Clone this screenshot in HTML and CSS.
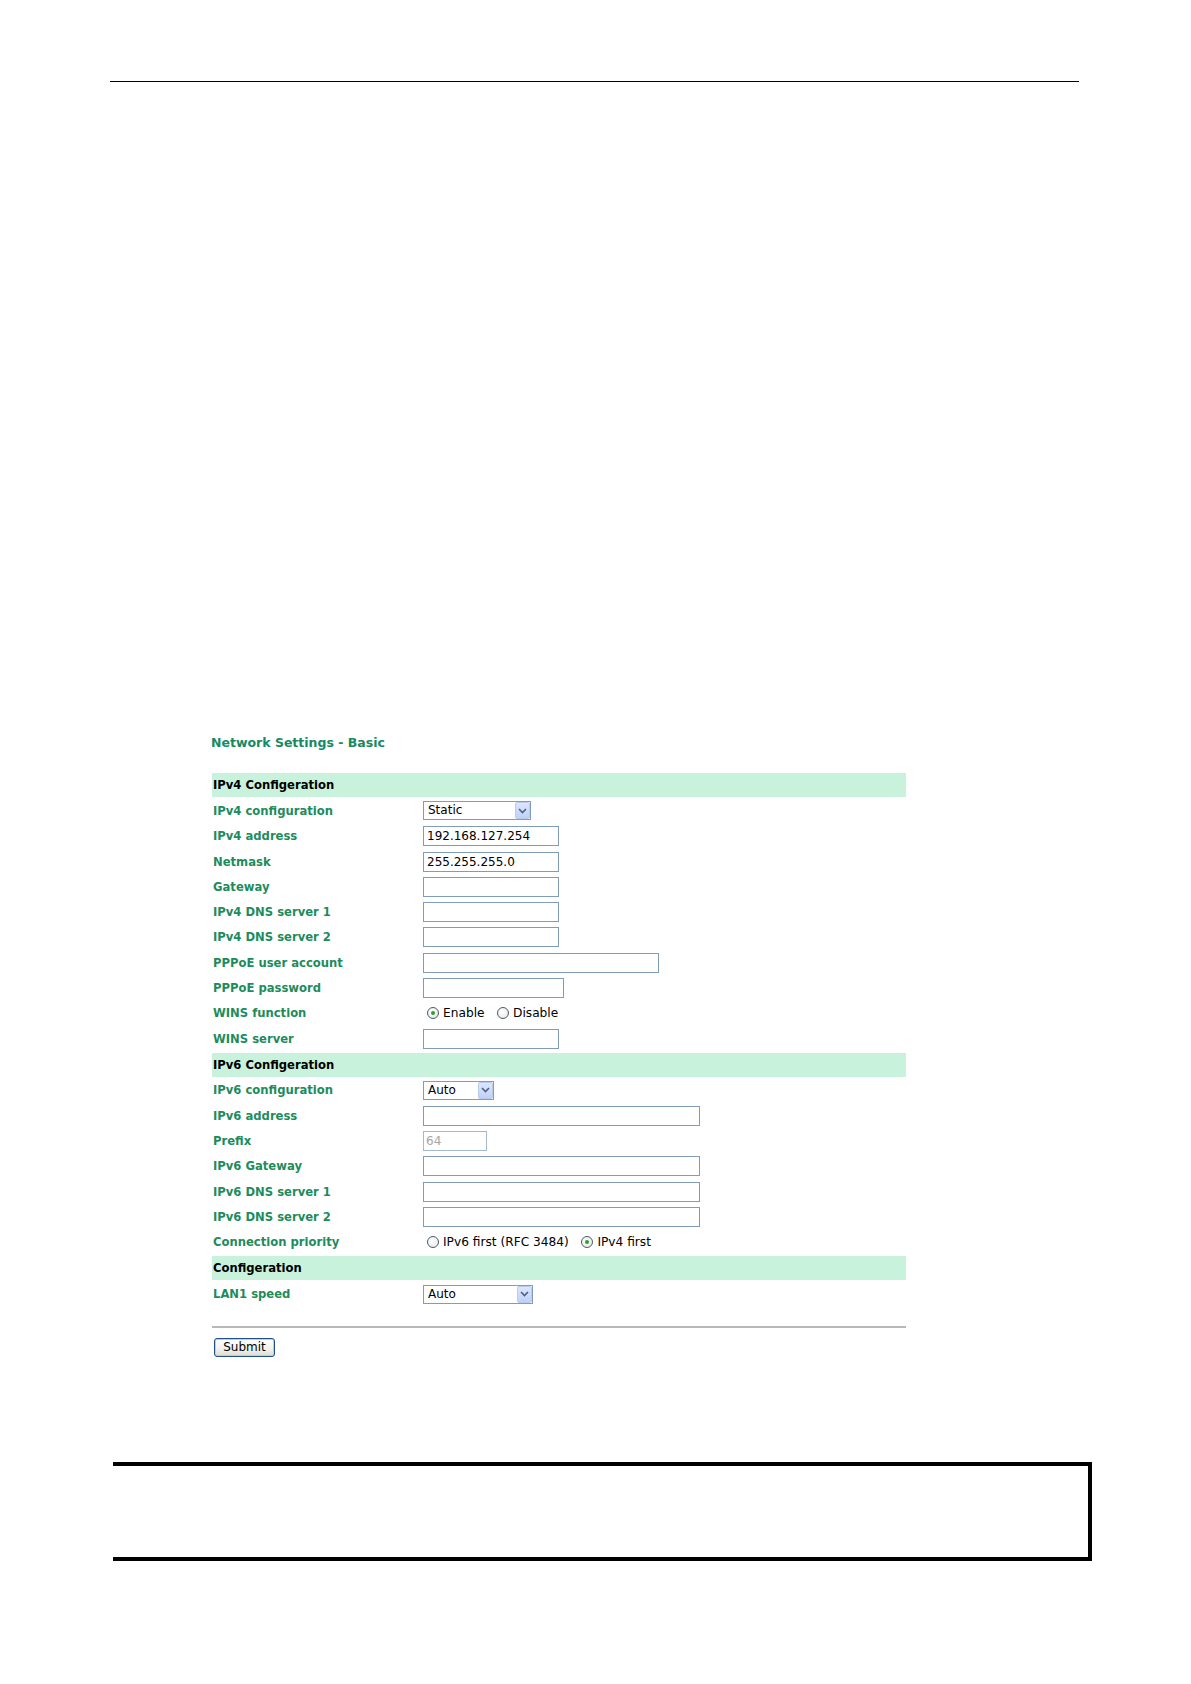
FILE: index.html
```html
<!DOCTYPE html>
<html>
<head>
<meta charset="utf-8">
<title>Network Settings - Basic</title>
<link rel="stylesheet" href="styles.css">
</head>
<body>
<div class="page-rule"></div>

<div class="form">
  <div class="title">Network Settings - Basic</div>

  <div class="table">
    <div class="bar">IPv4 Configeration</div>
    <div class="row"><div class="label">IPv4 configuration</div>
      <div class="select w107"><span class="sel-text">Static</span><span class="sel-btn"><svg width="9" height="6" viewBox="0 0 9 6"><path d="M1 1 L4.5 4.5 L8 1" fill="none" stroke="#4d6185" stroke-width="1.6"/></svg></span></div></div>
    <div class="row"><div class="label">IPv4 address</div><div class="input w135">192.168.127.254</div></div>
    <div class="row"><div class="label">Netmask</div><div class="input w135">255.255.255.0</div></div>
    <div class="row"><div class="label">Gateway</div><div class="input w135"></div></div>
    <div class="row"><div class="label">IPv4 DNS server 1</div><div class="input w135"></div></div>
    <div class="row"><div class="label">IPv4 DNS server 2</div><div class="input w135"></div></div>
    <div class="row"><div class="label">PPPoE user account</div><div class="input w235"></div></div>
    <div class="row"><div class="label">PPPoE password</div><div class="input w140"></div></div>
    <div class="row"><div class="label">WINS function</div>
      <div class="radios">
        <span class="radio checked"></span><span class="rtext">Enable</span>
        <span class="radio"></span><span class="rtext">Disable</span>
      </div></div>
    <div class="row"><div class="label">WINS server</div><div class="input w135"></div></div>

    <div class="bar">IPv6 Configeration</div>
    <div class="row"><div class="label">IPv6 configuration</div>
      <div class="select w71"><span class="sel-text">Auto</span><span class="sel-btn"><svg width="9" height="6" viewBox="0 0 9 6"><path d="M1 1 L4.5 4.5 L8 1" fill="none" stroke="#4d6185" stroke-width="1.6"/></svg></span></div></div>
    <div class="row"><div class="label">IPv6 address</div><div class="input w276"></div></div>
    <div class="row"><div class="label">Prefix</div><div class="input w64 disabled">64</div></div>
    <div class="row"><div class="label">IPv6 Gateway</div><div class="input w276"></div></div>
    <div class="row"><div class="label">IPv6 DNS server 1</div><div class="input w276"></div></div>
    <div class="row"><div class="label">IPv6 DNS server 2</div><div class="input w276"></div></div>
    <div class="row"><div class="label">Connection priority</div>
      <div class="radios">
        <span class="radio"></span><span class="rtext">IPv6 first (RFC 3484)</span>
        <span class="radio checked"></span><span class="rtext">IPv4 first</span>
      </div></div>

    <div class="bar">Configeration</div>
    <div class="row"><div class="label">LAN1 speed</div>
      <div class="select w105"><span class="sel-text">Auto</span><span class="sel-btn"><svg width="9" height="6" viewBox="0 0 9 6"><path d="M1 1 L4.5 4.5 L8 1" fill="none" stroke="#4d6185" stroke-width="1.6"/></svg></span></div></div>
  </div>

  <div class="hr"></div>
  <div class="actions"><button class="submit" type="button">Submit</button></div>
</div>

<div class="note-box"></div>
</body>
</html>
```

FILE: styles.css
```css
html, body {
  margin: 0;
  padding: 0;
  background: #ffffff;
}

body {
  font-family: "DejaVu Sans", Verdana, sans-serif;
  color: #000;
}

.page-rule {
  margin: 81px 0 0 110px;
  width: 969px;
  border-top: 1px solid #000;
}

.form {
  margin-left: 212px;
  width: 694px;
}

.title {
  margin-top: 653px;
  height: 16px;
  line-height: 16px;
  font-size: 12.5px;
  font-weight: bold;
  color: #158a63;
  margin-left: -1px;
}

.table {
  margin-top: 22px;
  display: flex;
  flex-direction: column;
  gap: 2.7px;
  width: 694px;
}

.bar {
  height: 24px;
  background: #c9f2dc;
  display: flex;
  align-items: center;
  font-size: 11.6px;
  font-weight: bold;
  color: #000;
  padding-left: 1px;
}

.row {
  height: 22.6px;
  display: flex;
  align-items: center;
}

.label {
  width: 210px;
  flex: none;
  padding-left: 1px;
  font-size: 11.6px;
  font-weight: bold;
  color: #1d8c5c;
}

.input {
  box-sizing: border-box;
  height: 20px;
  border: 1px solid #7f9db9;
  background: #fff;
  font-size: 12px;
  line-height: 18px;
  padding-left: 3px;
  color: #000;
  white-space: nowrap;
}

.input.disabled {
  color: #a5a5a5;
  border-color: #a6b8cc;
  padding-left: 2px;
}

.w64 { width: 64px; }
.w135 { width: 136px; }
.w140 { width: 141px; }
.w235 { width: 236px; }
.w276 { width: 277px; }
.w71 { width: 71px; }
.w105 { width: 110px; }
.w107 { width: 108px; }

.select {
  box-sizing: border-box;
  height: 19px;
  border: 1px solid #7f9db9;
  background: #fff;
  display: flex;
  align-items: stretch;
}

.sel-text {
  flex: 1;
  font-size: 12px;
  line-height: 17px;
  padding-left: 4px;
}

.sel-btn {
  width: 15px;
  margin: 0;
  box-sizing: border-box;
  border: 1px solid #b9cbf3;
  border-radius: 2px;
  background: linear-gradient(#dce6fd, #c0d1f7);
  display: flex;
  align-items: center;
  justify-content: center;
}

.radios {
  display: flex;
  align-items: center;
  padding-left: 4px;
  font-size: 12.2px;
}

.radio {
  box-sizing: border-box;
  width: 12px;
  height: 12px;
  border-radius: 50%;
  border: 1px solid #4a5a6e;
  background: radial-gradient(circle at 40% 40%, #ffffff 0%, #e6e6e0 100%);
  display: flex;
  align-items: center;
  justify-content: center;
  margin-right: 4px;
}

.radio.checked::after {
  content: "";
  width: 4px;
  height: 4px;
  border-radius: 50%;
  background: #2aa32a;
}

.rtext {
  margin-right: 12.5px;
  line-height: 16px;
}

.hr {
  margin-top: 21px;
  width: 694px;
  height: 0;
  border-top: 2px solid #b8b8b8;
}

.actions {
  margin-top: 8px;
  padding-left: 2px;
}

.submit {
  box-sizing: border-box;
  width: 61px;
  height: 19px;
  padding: 0;
  border: 1px solid #1f4f8f;
  border-radius: 3px;
  background: linear-gradient(#ffffff, #f1f1ec 60%, #dcdcd2);
  box-shadow: inset 0 0 0 1px #b7cdf2;
  font-family: "DejaVu Sans", Verdana, sans-serif;
  font-size: 12px;
  line-height: 16px;
  color: #000;
}

.note-box {
  margin: 105px 0 0 113px;
  width: 979px;
  height: 99px;
  box-sizing: border-box;
  border-top: 4px solid #000;
  border-bottom: 4px solid #000;
  border-right: 4px solid #000;
}
```
